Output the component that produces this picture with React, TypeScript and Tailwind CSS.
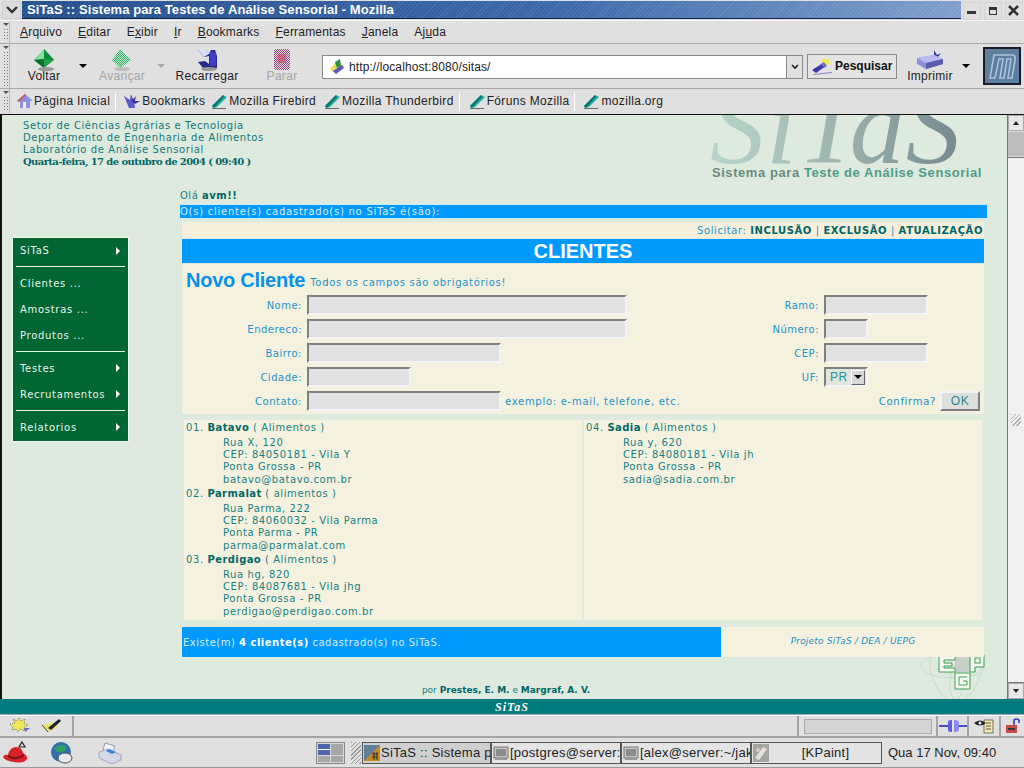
import React from 'react';

const ui = { fontFamily: '"Liberation Sans", Arial, sans-serif' };
const web = { fontFamily: '"DejaVu Sans", Verdana, sans-serif' };

const Grip = () => (
  <div className="w-[8px] h-full flex flex-col items-center border-r border-[#b8b8b8] mr-[1px] shrink-0">
    <div className="w-0 h-0 mt-[2px] border-x-[3px] border-x-transparent border-t-[3px] border-t-[#555]" />
    <div className="w-[6px] flex-1 mt-[2px] mb-[2px] bg-[radial-gradient(#777_0.7px,transparent_0.8px)] bg-[length:3px_3px]" />
  </div>
);

const DropArrow = ({ off }: { off?: boolean }) => (
  <div className={`w-0 h-0 border-x-[4px] border-x-transparent border-t-[4px] ${off ? 'border-t-[#aaa]' : 'border-t-black'}`} />
);

const Underlined = ({ pre, u, post }: { pre?: string; u: string; post?: string }) => (
  <span>{pre}<span className="underline">{u}</span>{post}</span>
);

const BackIcon = () => (
  <svg width="24" height="24" viewBox="0 0 24 24">
    <path d="M12 1 L22 12 L12 20 L2 12 Z" fill="#1fa34f" />
    <path d="M12 1 L2 12 L12 11 Z" fill="#7fe39f" />
    <path d="M12 1 L22 12 L12 11 Z" fill="#0f8a3c" />
    <path d="M2 12 L12 20 L12 11 Z" fill="#0a6e30" />
    <ellipse cx="14" cy="21" rx="8" ry="2" fill="#999" />
  </svg>
);

const ForwardIcon = () => (
  <svg width="24" height="24" viewBox="0 0 24 24">
    <defs>
      <pattern id="dith" width="2" height="2" patternUnits="userSpaceOnUse">
        <rect width="1" height="1" fill="#2fae66" />
        <rect x="1" y="1" width="1" height="1" fill="#2fae66" />
        <rect x="1" width="1" height="1" fill="#bfe8cc" />
        <rect y="1" width="1" height="1" fill="#bfe8cc" />
      </pattern>
    </defs>
    <path d="M10 1 L21 12 L10 20 L2 12 Z" fill="url(#dith)" />
    <ellipse cx="12" cy="21" rx="8" ry="2" fill="#bbb" />
  </svg>
);

const ReloadIcon = () => (
  <svg width="24" height="24" viewBox="0 0 24 24">
    <path d="M3 2 L20 2 L22 8 L22 20 L8 20 L3 14 L10 13 L14 16 L14 8 L9 9 Z" fill="#27298f" />
    <path d="M3 2 L16 2 L14 6 L9 9 Z" fill="#d8dcf4" />
    <path d="M15 4 L21 4 L21 18 L15 18 Z" fill="#3d40c0" />
    <ellipse cx="14" cy="21" rx="8" ry="2" fill="#999" />
  </svg>
);

const StopIcon = () => (
  <svg width="20" height="24" viewBox="0 0 20 24">
    <defs>
      <pattern id="dstop" width="2" height="2" patternUnits="userSpaceOnUse">
        <rect width="1" height="1" fill="#8a3a78" />
        <rect x="1" y="1" width="1" height="1" fill="#5f5f9f" />
      </pattern>
    </defs>
    <rect x="2" y="1" width="16" height="21" rx="3" fill="url(#dstop)" />
    <rect x="6" y="6" width="8" height="9" fill="#d03a5a" opacity="0.55" />
  </svg>
);

const PrintIcon = () => (
  <svg width="32" height="22" viewBox="0 0 32 22">
    <path d="M20 1 L23 6 L27 4 L24 8 L20 8 Z" fill="#3a3a9a" />
    <path d="M3 9 L20 6 L29 10 L29 15 L12 20 L3 15 Z" fill="#8d90d8" />
    <path d="M3 9 L20 6 L29 10 L12 14 Z" fill="#b9bcf0" />
    <path d="M12 14 L29 10 L29 15 L12 20 Z" fill="#5a5cb0" />
  </svg>
);

const SearchIcon = () => (
  <svg width="24" height="20" viewBox="0 0 24 20">
    <path d="M13 2 L16 4 L20 2 L18 6 L22 8 L16 9 L12 6 Z" fill="#f7ec3a" />
    <path d="M2 14 L13 7 L16 10 L6 17 Z" fill="#3c3ca8" />
    <path d="M11 8 L14 6 L17 10 L14 12 Z" fill="#6a6ad0" />
    <path d="M3 18 L22 16 L22 17 L4 19 Z" fill="#8a8ac8" />
  </svg>
);

const MozillaLogo = () => (
  <div className="w-[38px] h-[38px] border-2 border-[#1a1a2a] bg-[#5f7f9f] flex items-center justify-center shrink-0">
    <svg width="30" height="28" viewBox="0 0 30 28" fill="none" stroke="#a9c3da" strokeWidth="1.6">
      <path d="M3 26 L7 3 L25 3 Q29 3 28 8 L25 26 L21 26 L24 7 L20 7 L17 26 L13 26 L16 7 L12 7 L8 26 Z" />
    </svg>
  </div>
);

const HomeIcon = () => (
  <svg width="16" height="16" viewBox="0 0 16 16">
    <path d="M0 8 L8 1 L16 8 L13 8 L13 15 L3 15 L3 8 Z" fill="#8f8fe0" />
    <path d="M0 8 L8 1 L9 2 L2 9 Z" fill="#c05a5a" />
    <rect x="6" y="9" width="3" height="6" fill="#f0f0f0" />
  </svg>
);

const BookmarksIcon = () => (
  <svg width="18" height="18" viewBox="0 0 18 18">
    <path d="M1 4 L7 8 L8 2 L11 9 L12 16 L6 16 Z" fill="#5a5ac8" />
    <path d="M8 9 L13 4 L12 9 L17 9 L12 12 Z" fill="#3a3aa0" />
    <path d="M12 1 L13 5 L16 4 L13 7 Z" fill="#e8e070" />
  </svg>
);

const PenIcon = () => (
  <svg width="17" height="15" viewBox="0 0 17 15">
    <path d="M1 12 L12 1 L16 3 L6 13 L2 14 Z" fill="#1fb0a4" />
    <path d="M1 12 L12 1 L13 3 L3 14 Z" fill="#0b7570" />
    <path d="M1 14 L15 14 L15 15 L1 15 Z" fill="#6b6b6b" />
  </svg>
);

const UrlIcon = () => (
  <svg width="18" height="18" viewBox="0 0 18 18">
    <path d="M2 11 L10 2 L16 8 L8 16 Z" fill="#e8dc60" />
    <path d="M7 4 L12 1 L13 8 L9 10 Z" fill="#2f8f4f" />
    <path d="M5 13 L14 7 L16 10 L8 16 Z" fill="#5858c0" />
  </svg>
);

const Sep = () => <div className="w-[1px] h-[19px] bg-[#a8a8a8] border-r border-white mx-[5px] shrink-0" />;

const BookmarkLink = ({ children, icon, className }: { children: React.ReactNode; icon?: React.ReactNode; className?: string }) => (
  <div className={`flex items-center shrink-0 ${className ?? ''}`}>
    {icon ?? <PenIcon />}
    <span className="ml-[1px]">{children}</span>
  </div>
);

const TitleBar = () => (
  <div className="h-[20px] flex bg-[#e0e0e0] pt-[1px] shrink-0">
    <div className="w-[19px] h-[18px] ml-[2px] flex items-center justify-center bg-[#dcdcdc] border border-[#cfcfcf]">
      <svg width="12" height="8" viewBox="0 0 12 8" fill="none" stroke="#333" strokeWidth="2.4"><path d="M1 1 L6 6 L11 1" /></svg>
    </div>
    <div className="w-[939px] h-[18px] ml-[1px] pl-[5px] flex items-center bg-[repeating-linear-gradient(135deg,#ffffff14_0px,#ffffff14_1px,transparent_1px,transparent_3px),linear-gradient(90deg,#24508e_0%,#3a66a8_55%,#7f9fcc_100%)] border-b border-[#10204a]">
      <span className="text-white font-bold text-[13px] tracking-[0.1px]" style={ui}>SiTaS :: Sistema para Testes de Análise Sensorial - Mozilla</span>
    </div>
    <div className="flex-1 flex items-center justify-around">
      <div className="w-[18px] h-[18px] border border-[#d4d4d4] flex items-end justify-center pb-[5px]"><div className="w-[9px] h-[3px] bg-[#333]" /></div>
      <div className="w-[18px] h-[18px] border border-[#d4d4d4] flex items-center justify-center"><div className="w-[8px] h-[8px] border border-[#333] border-t-[3px]" /></div>
      <div className="w-[18px] h-[18px] border border-[#d4d4d4] flex items-center justify-center">
        <svg width="11" height="11" viewBox="0 0 11 11" stroke="#333" strokeWidth="2.6"><path d="M1 1 L10 10 M10 1 L1 10" /></svg>
      </div>
    </div>
  </div>
);

const MenuBar = () => (
  <div className="h-[24px] flex items-center bg-[#e0e0e0] border-y border-t-[#f4f4f4] border-b-[#a8a8a8] shrink-0 pl-[2px]">
    <Grip />
    <div className="flex gap-4 ml-[9px] text-[12px] text-[#222] tracking-[0.2px]" style={ui}>
      <Underlined u="A" post="rquivo" />
      <Underlined u="E" post="ditar" />
      <Underlined pre="E" u="x" post="ibir" />
      <Underlined u="I" post="r" />
      <Underlined u="B" post="ookmarks" />
      <Underlined u="F" post="erramentas" />
      <Underlined u="J" post="anela" />
      <Underlined pre="Aj" u="u" post="da" />
    </div>
  </div>
);

const NavBtn = ({ icon, label, off, className }: { icon: React.ReactNode; label: string; off?: boolean; className: string }) => (
  <div className={`flex flex-col items-center self-start mt-[6px] shrink-0 ${className}`}>
    <div className="h-[19px] flex items-center justify-center">{icon}</div>
    <span className={`text-[12px] tracking-[0.3px] leading-[14px] ${off ? 'text-[#a4a4a4]' : 'text-[#222]'}`} style={ui}>{label}</span>
  </div>
);

const NavBar = () => (
  <div className="h-[45px] flex items-center bg-[#e0e0e0] border-b border-[#a8a8a8] shrink-0 pl-[2px]">
    <Grip />
    <NavBtn icon={<BackIcon />} label="Voltar" className="w-[50px] ml-[8px]" />
    <div className="ml-[10px]"><DropArrow /></div>
    <NavBtn icon={<ForwardIcon />} label="Avançar" off className="w-[50px] ml-[10px]" />
    <div className="ml-[10px]"><DropArrow off /></div>
    <NavBtn icon={<ReloadIcon />} label="Recarregar" className="w-[66px] ml-[9px]" />
    <NavBtn icon={<StopIcon />} label="Parar" off className="w-[40px] ml-[22px]" />
    <div className="w-[481px] h-[24px] ml-[20px] mt-[2px] flex border border-[#8a8a8a] bg-white shrink-0">
      <div className="flex-1 flex items-center pl-[5px]">
        <UrlIcon />
        <span className="ml-[3px] text-[12px] tracking-[0.1px] text-[#222]" style={ui}>http://localhost:8080/sitas/</span>
      </div>
      <div className="w-[16px] bg-[#e0e0e0] border-l border-[#8a8a8a] flex items-center justify-center">
        <svg width="8" height="6" viewBox="0 0 8 6" fill="none" stroke="#222" strokeWidth="1.6"><path d="M1 1 L4 4 L7 1" /></svg>
      </div>
    </div>
    <div className="w-[90px] h-[25px] ml-[4px] flex items-center border border-[#8a8a8a] bg-[#e4e4e4] pl-[2px] shrink-0">
      <SearchIcon />
      <span className="ml-[1px] font-bold text-[12px] text-[#111]" style={ui}>Pesquisar</span>
    </div>
    <NavBtn icon={<PrintIcon />} label="Imprimir" className="w-[50px] ml-[8px]" />
    <div className="ml-[7px]"><DropArrow /></div>
    <div className="ml-[13px]"><MozillaLogo /></div>
  </div>
);

const PersonalBar = () => (
  <div className="h-[26px] flex items-center bg-[#e0e0e0] border-b border-[#111] shrink-0 pl-[2px] pb-[1px] text-[12px] text-[#222] tracking-[0.34px]" style={ui}>
    <Grip />
    <BookmarkLink icon={<HomeIcon />} className="ml-[6px]">Página Inicial</BookmarkLink>
    <Sep />
    <BookmarkLink icon={<BookmarksIcon />} className="ml-[2px]">Bookmarks</BookmarkLink>
    <BookmarkLink className="ml-[6px]">Mozilla Firebird</BookmarkLink>
    <BookmarkLink className="ml-[8px]">Mozilla Thunderbird</BookmarkLink>
    <Sep />
    <BookmarkLink className="ml-[4px]">Fóruns Mozilla</BookmarkLink>
    <Sep />
    <BookmarkLink className="ml-[3px]">mozilla.org</BookmarkLink>
  </div>
);

const Scrollbar = () => (
  <div className="w-[17px] h-full flex flex-col bg-[#e4e4e4] border-l border-[#777] shrink-0">
    <div className="h-[16px] bg-[#e8e8e8] border border-[#aaa] flex items-center justify-center">
      <div className="w-0 h-0 border-x-[3px] border-x-transparent border-b-[4px] border-b-[#222]" />
    </div>
    <div className="h-[26px] bg-[#bdbdbd] border-y border-[#d8d8d8]" />
    <div className="flex-1 bg-[#f0f0f0] border-y border-[#777] flex items-center justify-center">
      <div className="w-[10px] h-[12px] bg-[repeating-linear-gradient(135deg,#aaa_0px,#aaa_1px,transparent_1px,transparent_3px)]" />
    </div>
    <div className="h-[16px] bg-[#e8e8e8] border border-[#aaa] flex items-center justify-center">
      <div className="w-0 h-0 border-x-[3px] border-x-transparent border-t-[4px] border-t-[#222]" />
    </div>
  </div>
);

const Logo = () => (
  <div className="w-[285px] h-full mr-[25px] flex flex-col items-end overflow-hidden">
    <div className="h-[49px] w-full overflow-hidden relative shrink-0">
      <span
        className="absolute left-[13px] top-[-44px] text-[110px] leading-[110px] italic whitespace-nowrap tracking-[1px] bg-gradient-to-r from-[#b9d6ca] via-[#9db5ae] to-[#76898f] bg-clip-text text-transparent"
        style={{ fontFamily: '"Liberation Serif", serif' }}
      >
        SiTaS
      </span>
    </div>
    <div className="mt-[1px] font-bold text-[13px] leading-[16px] tracking-[0.57px] whitespace-nowrap" style={ui}>
      <span className="text-[#6b8a80]">Sistema para </span>
      <span className="text-[#4f9c88]">Teste de Análise Sensorial</span>
    </div>
  </div>
);

const PageHeader = () => (
  <div className="h-[75px] flex justify-between shrink-0">
    <div className="pl-[21px] pt-[5px] text-[10px] leading-[12px] tracking-[0.6px] text-[#11787a]" style={web}>
      <div>Setor de Ciências Agrárias e Tecnologia</div>
      <div>Departamento de Engenharia de Alimentos</div>
      <div>Laboratório de Análise Sensorial</div>
      <div className="font-bold text-[#006666] tracking-[-0.6px] leading-[11px]" style={{ fontFamily: '"DejaVu Serif", serif' }}>Quarta-feira, 17 de outubro de 2004 ( 09:40 )</div>
    </div>
    <Logo />
  </div>
);

const SideItem = ({ label, arrow, first }: { label: string; arrow?: boolean; first?: boolean }) => (
  <div className={`flex items-center justify-between pl-[7px] pr-[8px] ${first ? 'h-[25px]' : 'h-[26px]'}`}>
    <span>{label}</span>
    {arrow && <div className="w-0 h-0 border-y-[4px] border-y-transparent border-l-[4px] border-l-white" />}
  </div>
);

const SideRule = () => <div className="h-[1px] bg-[#e8f4e8] mx-[3px] my-[3px]" />;

const SideMenu = () => (
  <div className="w-[117px] ml-[10px] bg-[#006633] border border-[#f0f5ec] pb-[1px] text-[10px] tracking-[0.7px] text-[#e8f4ec]" style={web}>
    <SideItem label="SiTaS" arrow first />
    <SideRule />
    <SideItem label="Clientes ..." />
    <SideItem label="Amostras ..." />
    <SideItem label="Produtos ..." />
    <SideRule />
    <SideItem label="Testes" arrow />
    <SideItem label="Recrutamentos" arrow />
    <SideRule />
    <SideItem label="Relatorios" arrow />
  </div>
);

const Field = ({ className }: { className: string }) => (
  <div className={`h-[20px] bg-[#e2e2e2] border-2 border-t-[#808080] border-l-[#808080] border-b-[#f4f4f4] border-r-[#f4f4f4] shrink-0 ${className}`} />
);

const FormRow = ({ left, right, leftField, rightField }: { left: string; right: string; leftField: React.ReactNode; rightField: React.ReactNode }) => (
  <div className="h-[24px] flex items-center">
    <span className="w-[120px] text-right shrink-0">{left}</span>
    <div className="w-[400px] ml-[5px] flex items-center shrink-0">{leftField}</div>
    <span className="w-[112px] text-right shrink-0">{right}</span>
    <div className="ml-[5px]">{rightField}</div>
  </div>
);

const ClientForm = () => (
  <div className="h-[150px] bg-[#f4f2df] text-[10px] tracking-[0.5px] text-[#2390c8]" style={web}>
    <div className="h-[29px] flex items-center pl-[4px] pt-[2px]">
      <span className="font-bold text-[20px] text-[#0b8fe8] tracking-[-0.25px]" style={ui}>Novo Cliente</span>
      <span className="ml-[5px] mt-[6px] tracking-[0.7px]">Todos os campos são obrigatórios!</span>
    </div>
    <FormRow left="Nome:" right="Ramo:" leftField={<Field className="w-[320px]" />} rightField={<Field className="w-[104px]" />} />
    <FormRow left="Endereco:" right="Número:" leftField={<Field className="w-[320px]" />} rightField={<Field className="w-[44px]" />} />
    <FormRow left="Bairro:" right="CEP:" leftField={<Field className="w-[194px]" />} rightField={<Field className="w-[104px]" />} />
    <FormRow
      left="Cidade:"
      right="UF:"
      leftField={<Field className="w-[104px]" />}
      rightField={
        <div className="w-[44px] h-[20px] bg-[#dfe6e0] border-2 border-t-[#808080] border-l-[#808080] border-b-[#f4f4f4] border-r-[#f4f4f4] flex items-center justify-between pl-[4px] text-[12px] text-[#2b8f9c]" style={ui}>
          PR
          <div className="w-[14px] h-[15px] bg-[#d8d8d8] border border-b-[#666] border-r-[#666] border-t-white border-l-white flex items-center justify-center mr-[1px]">
            <div className="w-0 h-0 border-x-[4px] border-x-transparent border-t-[4px] border-t-black" />
          </div>
        </div>
      }
    />
    <div className="h-[24px] flex items-center">
      <span className="w-[120px] text-right shrink-0">Contato:</span>
      <Field className="w-[194px] ml-[5px]" />
      <span className="ml-[4px] tracking-[0.72px]">exemplo: e-mail, telefone, etc.</span>
      <span className="ml-auto tracking-[0.7px]">Confirma?</span>
      <div className="w-[40px] h-[20px] ml-[4px] mr-[4px] bg-[#dedede] border-2 border-t-[#f4f4f4] border-l-[#f4f4f4] border-b-[#808080] border-r-[#808080] flex items-center justify-center text-[12px] text-[#1f8a8c]" style={ui}>OK</div>
    </div>
  </div>
);

type Client = { n: string; name: string; kind: string; lines: string[] };

const leftClients: Client[] = [
  { n: '01.', name: 'Batavo', kind: '( Alimentos )', lines: ['Rua X, 120', 'CEP: 84050181 - Vila Y', 'Ponta Grossa - PR', 'batavo@batavo.com.br'] },
  { n: '02.', name: 'Parmalat', kind: '( alimentos )', lines: ['Rua Parma, 222', 'CEP: 84060032 - Vila Parma', 'Ponta Parma - PR', 'parma@parmalat.com'] },
  { n: '03.', name: 'Perdigao', kind: '( Alimentos )', lines: ['Rua hg, 820', 'CEP: 84087681 - Vila jhg', 'Ponta Grossa - PR', 'perdigao@perdigao.com.br'] },
];

const rightClients: Client[] = [
  { n: '04.', name: 'Sadia', kind: '( Alimentos )', lines: ['Rua y, 620', 'CEP: 84080181 - Vila jh', 'Ponta Grossa - PR', 'sadia@sadia.com.br'] },
];

const ClientEntry = ({ c }: { c: Client }) => (
  <div className="h-[66px]">
    <div className="h-[17px] leading-[16px]">
      {c.n} <span className="font-bold text-[#006666] tracking-[0.4px]">{c.name}</span> {c.kind}
    </div>
    <div className="pl-[37px] leading-[12.2px]">
      {c.lines.map((l) => <div key={l}>{l}</div>)}
    </div>
  </div>
);

const ClientList = () => (
  <div className="h-[200px] mx-[2px] mt-[6px] grid grid-cols-[398px_398px] gap-x-[2px] text-[10px] tracking-[0.6px] text-[#14807f]" style={web}>
    <div className="bg-[#f4f2df] pl-[2px]">
      {leftClients.map((c) => <ClientEntry key={c.n} c={c} />)}
    </div>
    <div className="bg-[#f4f2df] pl-[2px]">
      {rightClients.map((c) => <ClientEntry key={c.n} c={c} />)}
    </div>
  </div>
);

const UepgLogo = () => (
  <div className="absolute right-[17px] top-[515px] w-[74px] h-[74px] z-0">
    <svg width="74" height="74" viewBox="0 0 74 74" fill="none">
      <ellipse cx="37" cy="36" rx="32" ry="12" stroke="#cddccd" />
      <ellipse cx="30" cy="44" rx="14" ry="28" stroke="#cddccd" transform="rotate(-20 30 44)" />
      <ellipse cx="50" cy="44" rx="14" ry="28" stroke="#cddccd" transform="rotate(20 50 44)" />
      <rect x="39" y="27" width="15" height="15" fill="#c8cec8" />
      <path d="M23 25 H39 V30 H28 V33 H36 V36 H28 V38 H39 V42 H23 Z" fill="#f4f8f0" stroke="#3f9f4f" />
      <path d="M54 25 H68 V37 H59 V42 H54 Z" fill="#f4f8f0" stroke="#3f9f4f" />
      <rect x="59" y="28" width="5" height="5" stroke="#3f9f4f" />
      <path d="M39 43 H54 V59 H39 Z" fill="#f4f8f0" stroke="#3f9f4f" />
      <path d="M51 47 H43 V55 H51 V51 H47" stroke="#3f9f4f" />
    </svg>
  </div>
);

const MainColumn = () => (
  <div className="w-[807px] relative z-10">
    <div className="h-[15px] flex items-end pb-[3px] text-[10px] leading-[12px] tracking-[0.5px] text-[#14807f]" style={web}>
      <span>Olá <span className="font-bold text-[#006666]">avm!!</span></span>
    </div>
    <div className="h-[13px] bg-[#0099ff] text-[10px] leading-[13px] tracking-[0.75px] text-[#d8ecf8] shadow-[0_0_0_1px_#c8ecf8]" style={web}>O(s) cliente(s) cadastrado(s) no SiTaS é(são):</div>
    <div className="h-[16px] mt-[4px] ml-[2px] mr-[3px] pr-[1px] bg-[#f5efdc] flex items-center justify-end text-[10px] tracking-[0.58px] text-[#2390c8]" style={web}>
      Solicitar:&nbsp;<span className="font-bold text-[#006666]">INCLUSÃO</span>&nbsp;|&nbsp;<span className="font-bold text-[#006666]">EXCLUSÃO</span>&nbsp;|&nbsp;<span className="font-bold text-[#006666]">ATUALIZAÇÃO</span>
    </div>
    <div className="h-[24px] mt-[1px] ml-[2px] mr-[3px] bg-[#0099ff] flex items-center justify-center font-bold text-[20px] text-white" style={ui}>CLIENTES</div>
    <div className="mt-[1px] ml-[2px] mr-[3px]">
      <ClientForm />
      <ClientList />
      <div className="h-[30px] mt-[7px] flex text-[10px] tracking-[0.5px]" style={web}>
        <div className="w-[539px] bg-[#0099ff] flex items-center pl-[1px] text-[#d8ecf8]">
          <span>Existe(m) <span className="font-bold text-white">4 cliente(s)</span> cadastrado(s) no SiTaS.</span>
        </div>
        <div className="flex-1 ml-[1px] bg-[#f4f2df] flex items-center justify-center text-[9px] italic tracking-[0.2px] text-[#2390c8]">Projeto SiTaS / DEA / UEPG</div>
      </div>
      <div className="mt-[27px] text-center text-[9px] leading-[12px] text-[#14807f] pr-[154px]" style={web}>
        por <span className="font-bold text-[#006666]">Prestes, E. M.</span> e <span className="font-bold text-[#006666]">Margraf, A. V.</span>
      </div>
    </div>
  </div>
);

const PageContent = () => (
  <div className="h-[584px] flex border-l-2 border-l-[#111] shrink-0 bg-[#dfeadf]">
    <div className="flex-1 flex flex-col overflow-hidden relative">
      <PageHeader />
      <div className="flex">
        <div className="w-[178px] pt-[47px] shrink-0"><SideMenu /></div>
        <MainColumn />
      </div>
      <UepgLogo />
    </div>
    <Scrollbar />
  </div>
);

const FooterBand = () => (
  <div className="h-[16px] bg-[#007b7b] border-b border-[#9ac] flex items-center justify-center shrink-0">
    <span className="italic font-bold text-[12px] leading-[14px] tracking-[1px] text-white" style={{ fontFamily: '"Liberation Serif", serif' }}>SiTaS</span>
  </div>
);

const BugIcon = () => (
  <svg width="24" height="20" viewBox="0 0 24 20">
    <path d="M2 8 L7 7 L5 3 L9 5 L11 2 L13 5 L17 3 L16 7 L20 9 L16 11 L17 15 L12 13 L10 16 L8 13 L4 14 L5 11 Z" fill="#eee85c" stroke="#333" strokeWidth="0.6" strokeDasharray="1 1" />
    <path d="M16 12 L22 12 L17 16 Z" fill="#6a6ad8" />
  </svg>
);

const ComposerIcon = () => (
  <svg width="24" height="20" viewBox="0 0 24 20">
    <path d="M2 9 L8 16 L18 11 L13 7 Z" fill="#e9e26a" />
    <path d="M8 12 L19 3 L21 5 L11 14 Z" fill="#222" />
    <path d="M2 9 L8 16" stroke="#444" />
  </svg>
);

const PlugIcon = () => (
  <svg width="28" height="14" viewBox="0 0 28 14">
    <rect x="0" y="6" width="9" height="2" fill="#4a4ac0" />
    <rect x="20" y="6" width="8" height="2" fill="#4a4ac0" />
    <path d="M9 3 Q9 1 13 1 L13 13 Q9 13 9 11 Z" fill="#6060d8" />
    <path d="M15 1 Q20 1 20 4 L20 10 Q20 13 15 13 Z" fill="#8a8aea" />
  </svg>
);

const EyeIcon = () => (
  <svg width="22" height="16" viewBox="0 0 22 16">
    <path d="M11 2 H20 V15 H11 Z" fill="#f3e8a8" stroke="#444" strokeWidth="0.7" />
    <path d="M13 5 H18 M13 8 H18 M13 11 H18" stroke="#555" />
    <path d="M1 5 Q7 0 13 5 Q7 10 1 5 Z" fill="#222" />
    <circle cx="7" cy="5" r="1.5" fill="#eee" />
  </svg>
);

const LockIcon = () => (
  <svg width="16" height="16" viewBox="0 0 16 16">
    <path d="M9 7 V3 Q9 1 11.5 1 Q14 1 14 3 V5" fill="none" stroke="#3a3ab0" strokeWidth="1.6" />
    <rect x="1" y="7" width="11" height="8" fill="#c84a4a" />
    <rect x="3" y="10" width="7" height="2" fill="#333" />
  </svg>
);

const StatusBar = () => (
  <div className="h-[23px] flex bg-[#e0e0e0] border-b-2 border-[#a4a4a4] border-t border-t-white shrink-0">
    <div className="w-[74px] flex items-center pl-[8px] gap-[8px] border-r-2 border-[#a4a4a4]">
      <BugIcon />
      <ComposerIcon />
    </div>
    <div className="w-[725px] border-r-2 border-[#a4a4a4]" />
    <div className="w-[139px] flex items-center justify-center border-r-2 border-[#a4a4a4]">
      <div className="w-[128px] h-[15px] bg-[#d4d4d4] border border-[#aaa]" />
    </div>
    <div className="w-[31px] flex items-center justify-center border-r-2 border-[#a4a4a4]"><PlugIcon /></div>
    <div className="w-[32px] flex items-center justify-center border-r-2 border-[#a4a4a4]"><EyeIcon /></div>
    <div className="flex-1 flex items-center justify-center"><LockIcon /></div>
  </div>
);

const RedHat = () => (
  <svg width="30" height="28" viewBox="0 0 30 28">
    <path d="M20 3 L23 8 L17 8 Z" fill="none" stroke="#222" strokeWidth="1.2" />
    <path d="M1 18 Q2 15 6 16 Q8 8 14 8 Q20 8 21 14 Q26 17 25 20 Q22 25 12 23 Q3 22 1 18 Z" fill="#d8222a" />
    <path d="M6 16 Q14 21 22 15 L22 17 Q14 23 6 18 Z" fill="#7a1010" />
  </svg>
);

const GlobeIcon = () => (
  <svg width="24" height="26" viewBox="0 0 24 26">
    <circle cx="11" cy="12" r="10" fill="#2f6fb0" />
    <path d="M4 8 Q10 3 16 6 Q18 11 12 12 Q7 14 4 8 Z" fill="#2fa05f" />
    <ellipse cx="15" cy="18" rx="7" ry="5" fill="#e8e8f0" stroke="#555" />
  </svg>
);

const TrayPrinter = () => (
  <svg width="24" height="24" viewBox="0 0 24 24">
    <path d="M7 2 L17 5 L15 11 L5 9 Z" fill="#eef2fb" stroke="#667" strokeWidth="0.6" />
    <path d="M1 11 L10 8 L23 14 L23 19 L14 23 L1 17 Z" fill="#d4d8e8" stroke="#889" strokeWidth="0.6" />
    <path d="M11 8 L18 11 L14 13 L8 10 Z" fill="#3a7fd8" />
  </svg>
);

const Pager = () => (
  <div className="w-[29px] h-[22px] grid grid-cols-2 gap-[1px] p-[1px] bg-[#d8d8d8] border border-[#888] shrink-0">
    <div className="bg-[#f0f0f0] flex flex-col"><div className="h-[5px] bg-[#4a66b0]" /><div className="h-[1px] bg-white" /><div className="flex-1 bg-[#4a66b0]" /></div>
    <div className="bg-[#a6a6a6]" />
    <div className="bg-[#a6a6a6]" />
    <div className="bg-[#a6a6a6]" />
  </div>
);

const TaskIcon = ({ kind }: { kind: 'moz' | 'term' | 'paint' }) => {
  if (kind === 'moz') {
    return (
      <svg width="16" height="16" viewBox="0 0 16 16" className="shrink-0">
        <rect width="16" height="16" fill="#5f7f9f" />
        <path d="M16 0 L0 16 L16 16 Z" fill="#c98a20" />
        <path d="M8 9 H14 M8 12 H14 M10 7 V15 M13 7 V15" stroke="#333" />
      </svg>
    );
  }
  if (kind === 'term') {
    return (
      <svg width="16" height="16" viewBox="0 0 16 16" className="shrink-0">
        <rect x="1" y="2" width="14" height="11" fill="#c4c4c4" stroke="#777" />
        <rect x="3" y="4" width="10" height="7" fill="#8c8c8c" />
        <rect x="2" y="13" width="12" height="2" fill="#9a9a9a" />
      </svg>
    );
  }
  return (
    <svg width="16" height="18" viewBox="0 0 16 18" className="shrink-0">
      <rect width="16" height="18" fill="#a6a6a0" />
      <path d="M2 14 L10 3 L14 5 L6 16 Z" fill="#e6e2dc" />
      <circle cx="5" cy="6" r="2" fill="#d8c8c0" />
    </svg>
  );
};

const Task = ({ icon, label, active, center, w }: { icon: 'moz' | 'term' | 'paint'; label: string; active?: boolean; center?: boolean; w: string }) => (
  <div className={`h-[22px] flex items-center pl-[1px] overflow-hidden border border-[#555] shrink-0 ${w} ${active ? 'bg-[#cfcfcf]' : 'bg-[#e4e4e4]'}`}>
    <TaskIcon kind={icon} />
    <span className={`ml-[1px] text-[13px] tracking-[0.25px] whitespace-nowrap text-[#222] ${center ? 'flex-1 text-center' : ''}`} style={ui}>{label}</span>
  </div>
);

const Taskbar = () => (
  <div className="h-[30px] flex items-center bg-[#e0e0e0] shrink-0 border-b border-[#999]">
    <div className="ml-[2px]"><RedHat /></div>
    <div className="ml-[18px]"><GlobeIcon /></div>
    <div className="ml-[24px]"><TrayPrinter /></div>
    <div className="ml-[194px]"><Pager /></div>
    <div className="w-[10px] h-[22px] ml-[6px] mr-[1px] shrink-0 bg-[repeating-linear-gradient(135deg,#999_0px,#999_1px,transparent_1px,transparent_3px)]" />
    <Task icon="moz" label="SiTaS :: Sistema para" active w="w-[129px]" />
    <Task icon="term" label="[postgres@server:/home" w="w-[130px]" />
    <Task icon="term" label="[alex@server:~/jakarta" w="w-[130px]" />
    <Task icon="paint" label="[KPaint]" center w="w-[131px]" />
    <span className="ml-[6px] text-[13px] text-[#222] whitespace-nowrap" style={ui}>Qua 17 Nov, 09:40</span>
  </div>
);

export default function App() {
  return (
    <div className="w-[1024px] h-[768px] flex flex-col overflow-hidden bg-[#e0e0e0]">
      <TitleBar />
      <MenuBar />
      <NavBar />
      <PersonalBar />
      <PageContent />
      <FooterBand />
      <StatusBar />
      <Taskbar />
    </div>
  );
}
